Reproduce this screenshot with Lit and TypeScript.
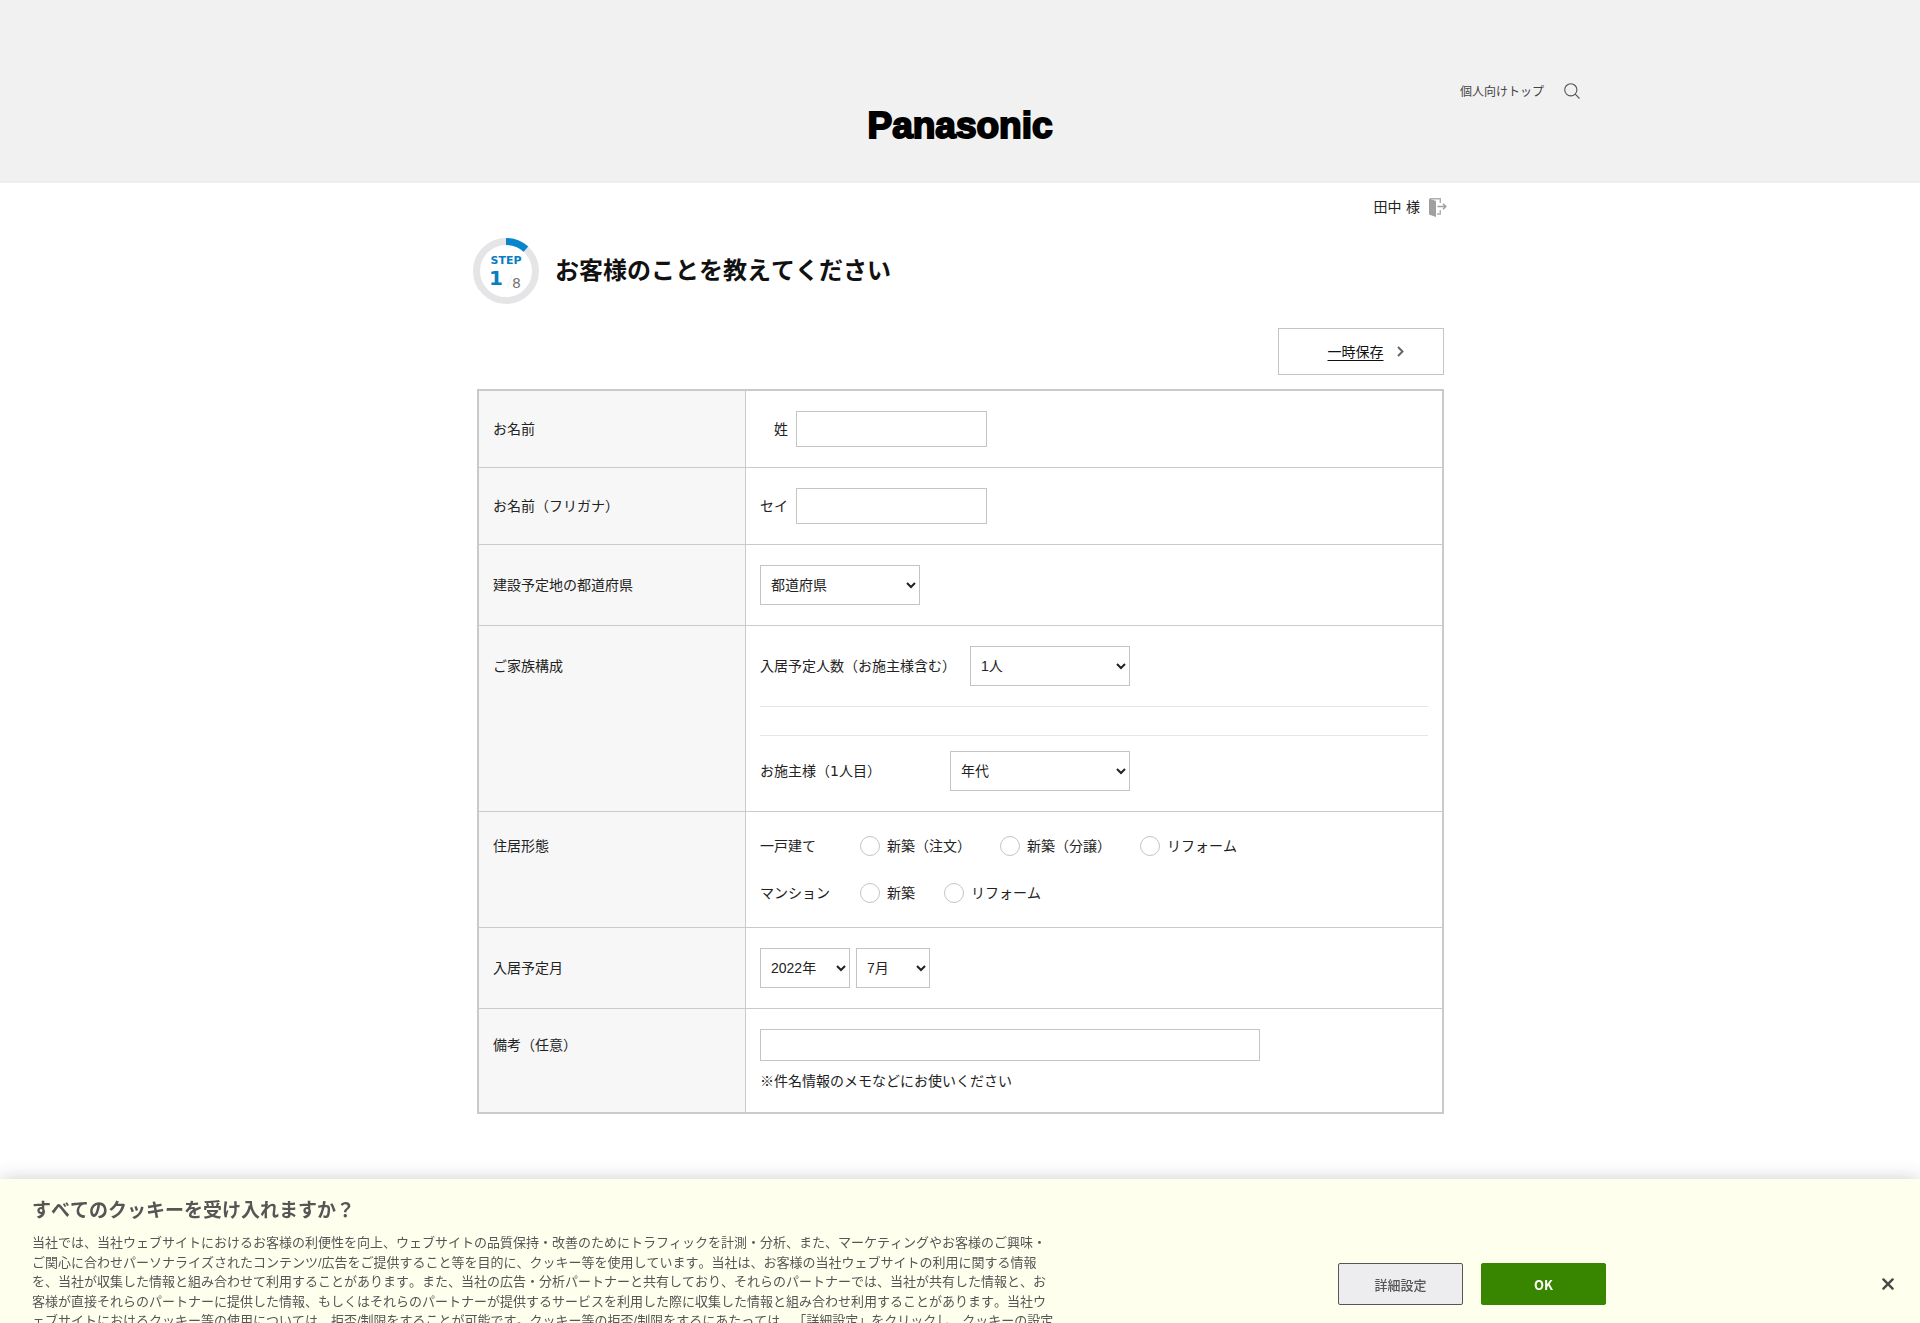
import { LitElement, html, css } from "lit";
import { customElement, state } from "lit/decorators.js";

const houseTypes = [
  { group: "一戸建て", options: ["新築（注文）", "新築（分譲）", "リフォーム"] },
  { group: "マンション", options: ["新築", "リフォーム"] },
];

@customElement("site-header")
class SiteHeader extends LitElement {
  static styles = css`
    :host {
      display: block;
      background: #f1f1f1;
      border-bottom: 2px solid #eeeeee;
    }
    .inner {
      max-width: 1240px;
      margin: 0 auto;
      padding: 80px 0 35px;
    }
    .nav {
      display: flex;
      justify-content: flex-end;
      align-items: center;
      gap: 20px;
      height: 22px;
    }
    .link {
      color: #444;
      font-family: "Noto Sans CJK JP", sans-serif;
      font-size: 12px;
      line-height: 20px;
      text-decoration: none;
    }
    .search {
      display: flex;
      padding: 0;
      border: 0;
      background: none;
      cursor: pointer;
    }
    .brand {
      display: block;
      width: fit-content;
      margin: 4px auto 0;
      color: #000;
      font: 700 37px/40px "Liberation Sans", Arial, sans-serif;
      -webkit-text-stroke: 2px #000;
      text-decoration: none;
    }
  `;
  render() {
    return html`
      <header class="inner">
        <nav class="nav">
          <a class="link" href="#">個人向けトップ</a>
          <button class="search" aria-label="検索">
            <svg width="16" height="16" viewBox="0 0 16 16" fill="none" stroke="#555" stroke-width="1.1">
              <circle cx="6.8" cy="6.8" r="6.1" />
              <path d="M11.2 11.2l4.3 4.3" />
            </svg>
          </button>
        </nav>
        <a class="brand" href="#">Panasonic</a>
      </header>
    `;
  }
}

@customElement("step-heading")
class StepHeading extends LitElement {
  static styles = css`
    :host {
      display: flex;
      align-items: center;
      gap: 16px;
    }
    .title {
      margin: 0;
      color: #111;
      font-size: 24px;
      line-height: 36px;
      font-weight: 700;
    }
    .label {
      font: 700 11px "DejaVu Sans", sans-serif;
      fill: #0a7dc0;
    }
    .current {
      font: 700 20px "DejaVu Sans", sans-serif;
      fill: #0a7dc0;
    }
    .total {
      font: 400 14px "DejaVu Sans", sans-serif;
      fill: #777;
    }
  `;
  render() {
    return html`
      <svg width="66" height="66" viewBox="0 0 66 66">
        <circle cx="33" cy="33" r="29.5" fill="none" stroke="#e5e5e7" stroke-width="7" />
        <path d="M33 3.5A29.5 29.5 0 0 1 52.9 11.2" fill="none" stroke="#0785cc" stroke-width="7" />
        <text class="label" x="33" y="26" text-anchor="middle">STEP</text>
        <text class="current" x="16" y="47">1</text>
        <path d="M34 50l5-13" stroke="#f0f0f0" />
        <text class="total" x="39" y="50">8</text>
      </svg>
      <h1 class="title">お客様のことを教えてください</h1>
    `;
  }
}

@customElement("customer-form")
class CustomerForm extends LitElement {
  @state() private house = "";

  static styles = css`
    :host {
      display: block;
    }
    .table {
      width: 100%;
      border-collapse: separate;
      border-spacing: 0;
      border: 2px solid #cacaca;
      box-sizing: border-box;
      font-size: 14px;
      line-height: 28px;
      color: #222;
    }
    .head,
    .cell {
      padding: 20px 14px;
      text-align: left;
      font-weight: 400;
      vertical-align: baseline;
      border-bottom: 1px solid #cacaca;
    }
    .head {
      width: 238px;
      background: #f7f7f7;
      border-right: 1px solid #cacaca;
    }
    .row:last-child > .head,
    .row:last-child > .cell {
      border-bottom: 0;
    }
    .line {
      display: flex;
      align-items: center;
    }
    .short {
      width: 28px;
      margin-right: 8px;
      text-align: right;
    }
    .input,
    .select {
      box-sizing: border-box;
      border: 1px solid #c4c4c4;
      border-radius: 0;
      background: #fff;
      color: #222;
      font-family: "Liberation Sans", "Noto Sans CJK JP", sans-serif;
      font-size: 14px;
      margin: 0;
    }
    .input {
      width: 191px;
      height: 36px;
      padding: 0 10px;
    }
    .input.wide {
      width: 500px;
      max-width: 100%;
      height: 32px;
    }
    .select {
      width: 160px;
      height: 40px;
      padding: 0 6px 0 6px;
    }
    .select.age {
      width: 180px;
    }
    .select.year {
      width: 90px;
    }
    .select.month {
      width: 74px;
    }
    .count {
      gap: 14px;
      padding-bottom: 20px;
      border-bottom: 1px solid #e6e6e6;
    }
    .person {
      margin-top: 28px;
      padding-top: 15px;
      border-top: 1px solid #e6e6e6;
    }
    .owner {
      width: 190px;
    }
    .dates {
      gap: 6px;
    }
    .house + .house {
      margin-top: 19px;
    }
    .kind {
      width: 100px;
    }
    .option {
      display: flex;
      align-items: center;
      gap: 7px;
      margin-right: 29px;
    }
    .radio {
      appearance: none;
      box-sizing: border-box;
      width: 20px;
      height: 20px;
      margin: 0;
      border: 1px solid #c4c4c4;
      border-radius: 50%;
      background: #fff;
    }
    .radio:checked {
      border: 6px solid #0785cc;
    }
    .note {
      margin: 10px 0 0;
      font-family: "Liberation Sans", "Noto Sans CJK JP", sans-serif;
      line-height: 21px;
    }
  `;

  render() {
    return html`
      <table class="table">
        <tr class="row">
          <th class="head" scope="row">お名前</th>
          <td class="cell">
            <div class="line"><label class="short" for="name">姓</label><input class="input" id="name" type="text" /></div>
          </td>
        </tr>
        <tr class="row">
          <th class="head" scope="row">お名前（フリガナ）</th>
          <td class="cell">
            <div class="line"><label class="short" for="kana">セイ</label><input class="input" id="kana" type="text" /></div>
          </td>
        </tr>
        <tr class="row">
          <th class="head" scope="row"><label for="pref">建設予定地の都道府県</label></th>
          <td class="cell">
            <div class="line"><select class="select" id="pref"><option>都道府県</option></select></div>
          </td>
        </tr>
        <tr class="row">
          <th class="head" scope="row">ご家族構成</th>
          <td class="cell">
            <div class="line count">
              <label for="count">入居予定人数（お施主様含む）</label>
              <select class="select" id="count"><option>1人</option></select>
            </div>
            <div class="line person">
              <label class="owner" for="age">お施主様（1人目）</label>
              <select class="select age" id="age"><option>年代</option></select>
            </div>
          </td>
        </tr>
        <tr class="row">
          <th class="head" scope="row">住居形態</th>
          <td class="cell">
            ${houseTypes.map(
              (type) => html`
                <div class="line house" role="group" aria-label=${type.group}>
                  <span class="kind">${type.group}</span>
                  ${type.options.map((name) => {
                    const value = type.group + name;
                    return html`<label class="option"
                      ><input
                        class="radio"
                        type="radio"
                        name="house"
                        .checked=${this.house === value}
                        @change=${() => (this.house = value)}
                      />${name}</label
                    >`;
                  })}
                </div>
              `
            )}
          </td>
        </tr>
        <tr class="row">
          <th class="head" scope="row">入居予定月</th>
          <td class="cell">
            <div class="line dates">
              <select class="select year" aria-label="年"><option>2022年</option></select>
              <select class="select month" aria-label="月"><option>7月</option></select>
            </div>
          </td>
        </tr>
        <tr class="row">
          <th class="head" scope="row"><label for="memo">備考（任意）</label></th>
          <td class="cell">
            <div class="line"><input class="input wide" id="memo" type="text" /></div>
            <p class="note">※件名情報のメモなどにお使いください</p>
          </td>
        </tr>
      </table>
    `;
  }
}

@customElement("cookie-banner")
class CookieBanner extends LitElement {
  static styles = css`
    :host {
      position: fixed;
      left: 0;
      right: 0;
      bottom: 0;
      display: flex;
      align-items: flex-start;
      box-sizing: border-box;
      max-height: 144px;
      padding: 0 24px 0 32px;
      background: #ffffee;
      color: #565656;
      box-shadow: 0 0 18px rgba(0, 0, 0, 0.2);
      overflow: hidden;
    }
    .copy {
      flex: 0 1 1024px;
    }
    .title {
      margin: 17px 0 9px;
      font-size: 19px;
      line-height: 28px;
      font-weight: 700;
    }
    .text {
      margin: 0;
      font-family: "Liberation Sans", "Noto Sans CJK JP", sans-serif;
      font-size: 13px;
      line-height: 1.5;
      text-spacing-trim: space-all;
    }
    .actions {
      display: flex;
      flex-shrink: 0;
      gap: 18px;
      margin: 84px auto 0 282px;
    }
    .button {
      box-sizing: border-box;
      width: 125px;
      height: 42px;
      padding: 0;
      border: 1px solid #565656;
      border-radius: 2px;
      background: #ededf0;
      color: #565656;
      font: 500 13px "Liberation Sans", "Noto Sans CJK JP", sans-serif;
    }
    .button.accept {
      border-color: #388600;
      background: #388600;
      color: #fff;
      font-family: "Noto Sans CJK JP", sans-serif;
      font-weight: 700;
    }
    .close {
      display: flex;
      margin-top: 97px;
      padding: 2px;
      border: 0;
      background: none;
    }
  `;
  render() {
    return html`
      <div class="copy">
        <h2 class="title">すべてのクッキーを受け入れますか？</h2>
        <p class="text">
          当社では、当社ウェブサイトにおけるお客様の利便性を向上、ウェブサイトの品質保持・改善のためにトラフィックを計測・分析、また、マーケティングやお客様のご興味・ご関心に合わせパーソナライズされたコンテンツ/広告をご提供すること等を目的に、クッキー等を使用しています。当社は、お客様の当社ウェブサイトの利用に関する情報を、当社が収集した情報と組み合わせて利用することがあります。また、当社の広告・分析パートナーと共有しており、それらのパートナーでは、当社が共有した情報と、お客様が直接それらのパートナーに提供した情報、もしくはそれらのパートナーが提供するサービスを利用した際に収集した情報と組み合わせ利用することがあります。当社ウェブサイトにおけるクッキー等の使用については、拒否/制限をすることが可能です。クッキー等の拒否/制限をするにあたっては、「詳細設定」をクリックし、クッキーの設定
        </p>
      </div>
      <div class="actions">
        <button class="button">詳細設定</button>
        <button class="button accept">OK</button>
      </div>
      <button class="close" aria-label="閉じる">
        <svg width="12" height="12" viewBox="0 0 12 12" fill="none" stroke="#484848" stroke-width="2.4" stroke-linecap="round">
          <path d="M1.4 1.4l9.2 9.2M10.6 1.4l-9.2 9.2" />
        </svg>
      </button>
    `;
  }
}

@customElement("app-root")
class AppRoot extends LitElement {
  static styles = css`
    :host {
      display: block;
      min-height: 100vh;
      background: #fff;
      color: #222;
      font-family: "DejaVu Sans", "Noto Sans CJK JP", sans-serif;
      font-kerning: none;
    }
    .main {
      max-width: 967px;
      margin: 0 auto;
      padding: 14px 0 160px 1px;
    }
    .user {
      display: flex;
      justify-content: flex-end;
      align-items: center;
      gap: 9px;
      height: 20px;
      margin-right: -3px;
      font-size: 14px;
      line-height: 20px;
    }
    .logout {
      display: flex;
    }
    .step {
      margin: 21px 0 24px -4px;
    }
    .save {
      display: flex;
      align-items: center;
      justify-content: center;
      gap: 13px;
      box-sizing: border-box;
      width: 166px;
      height: 47px;
      margin: 0 0 14px auto;
      padding: 0 0 0 9px;
      border: 1px solid #c4c4c4;
      background: #fff;
      color: #111;
      font: 400 14px/20px "DejaVu Sans", "Noto Sans CJK JP", sans-serif;
    }
    .caption {
      text-decoration: underline;
      text-underline-offset: 3px;
    }
  `;
  render() {
    return html`
      <site-header></site-header>
      <main class="main">
        <div class="user">
          <span>田中 様</span>
          <a class="logout" href="#" aria-label="ログアウト">
            <svg width="18" height="19" viewBox="0 0 18 19" fill="none">
              <path d="M0 .5L7 3v16L0 16.500z" fill="#a0a0a0" />
              <path d="M1 .7h10.300v4.300M11.300 12v4H8" stroke="#b0b0b0" stroke-width="1.400" />
              <path d="M8.500 8.500h8M14 5.800l2.800 2.700L14 11.200" stroke="#a0a0a0" stroke-width="1.500" />
            </svg>
          </a>
        </div>
        <step-heading class="step"></step-heading>
        <button class="save">
          <span class="caption">一時保存</span>
          <svg width="7" height="11" viewBox="0 0 7 11" fill="none" stroke="#666" stroke-width="2">
            <path d="M1 1l4.500 4.500L1 10" />
          </svg>
        </button>
        <customer-form></customer-form>
      </main>
      <cookie-banner></cookie-banner>
    `;
  }
}
